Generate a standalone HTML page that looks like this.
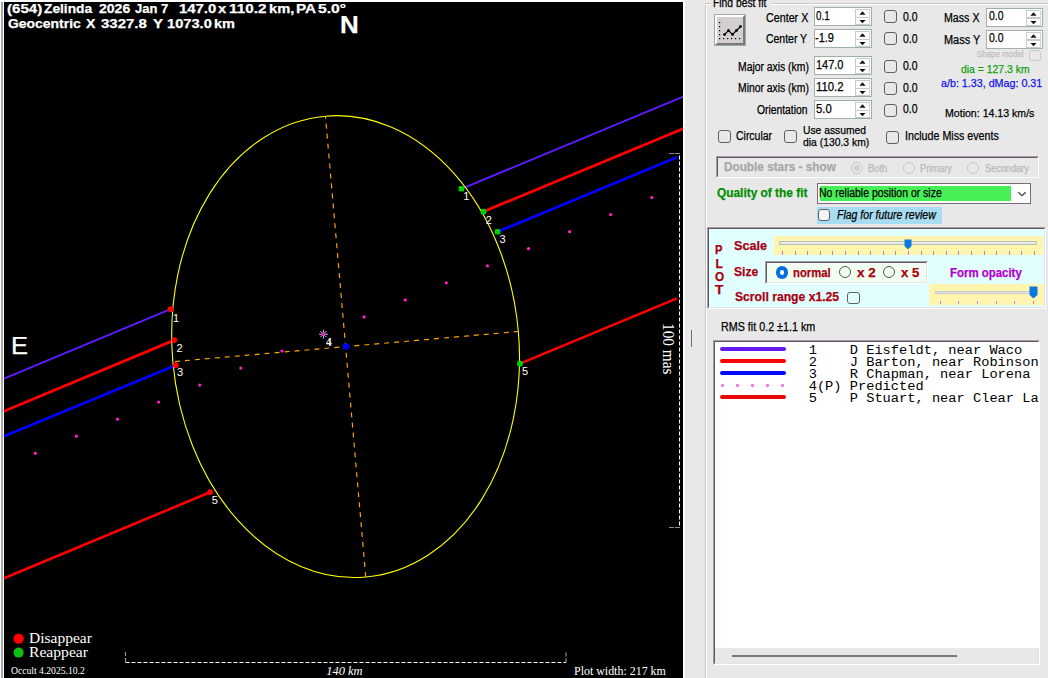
<!DOCTYPE html>
<html><head><meta charset="utf-8">
<style>
*{box-sizing:border-box}
html,body{margin:0;padding:0;overflow:hidden}
body{width:1048px;height:678px;overflow:hidden;position:relative;background:#e8e8e8;font-family:"Liberation Sans",sans-serif;}
.a{position:absolute;white-space:nowrap}
.nud{position:absolute;width:58px;height:19px;background:#fff;border:1px solid #a0b0a8}
.nud .sp{position:absolute;right:1px;top:1px;width:15px;height:16px;border:1px solid #c4d0c4;border-right-color:#d0d8d0}
.nud .sp b{position:absolute;left:0;right:0;top:6.5px;height:1.5px;background:#c8ccc8}
.nud .sp svg{position:absolute;left:0;top:0}
.cb{position:absolute;width:13px;height:13px;border:1px solid #606060;border-radius:3px}
.rd{position:absolute;width:12px;height:12px;border:1px solid #555;border-radius:50%}
</style></head><body>
<div class="a" style="left:0;top:0;width:4px;height:678px;background:#fff"></div>
<div class="a" style="left:1px;top:2px;width:2px;height:676px;background:#a8a8a8"></div>
<div class="a" style="left:0;top:0;width:685px;height:2px;background:#fff"></div>
<div class="a" style="left:4px;top:2px;width:679px;height:676px;background:#000"></div>
<div class="a" style="left:683px;top:0;width:2px;height:678px;background:#fff"></div>

<svg width="683" height="678" style="position:absolute;left:0;top:0"><circle cx="35.3" cy="453.3" r="1.6" fill="#ff20c0"/><circle cx="76.4" cy="436.2" r="1.6" fill="#ff20c0"/><circle cx="117.5" cy="419.2" r="1.6" fill="#ff20c0"/><circle cx="158.6" cy="402.1" r="1.6" fill="#ff20c0"/><circle cx="199.7" cy="385.1" r="1.6" fill="#ff20c0"/><circle cx="240.8" cy="368.1" r="1.6" fill="#ff20c0"/><circle cx="281.9" cy="351.0" r="1.6" fill="#ff20c0"/><circle cx="364.1" cy="316.9" r="1.6" fill="#ff20c0"/><circle cx="405.2" cy="299.9" r="1.6" fill="#ff20c0"/><circle cx="446.3" cy="282.8" r="1.6" fill="#ff20c0"/><circle cx="487.4" cy="265.8" r="1.6" fill="#ff20c0"/><circle cx="528.5" cy="248.7" r="1.6" fill="#ff20c0"/><circle cx="569.6" cy="231.7" r="1.6" fill="#ff20c0"/><circle cx="610.7" cy="214.6" r="1.6" fill="#ff20c0"/><circle cx="651.8" cy="197.6" r="1.6" fill="#ff20c0"/><line x1="4" y1="378.6" x2="170.6" y2="309.2" stroke="#5c1cff" stroke-width="1.9"/><line x1="461.4" y1="188.8" x2="684" y2="96.4" stroke="#5c1cff" stroke-width="1.9"/><line x1="4" y1="411.3" x2="174.3" y2="340.1" stroke="#ff0000" stroke-width="2.8"/><line x1="483.5" y1="211.6" x2="684" y2="128.4" stroke="#ff0000" stroke-width="2.8"/><line x1="4" y1="436.3" x2="175.8" y2="365.2" stroke="#0000ff" stroke-width="2.8"/><line x1="497.5" y1="231.8" x2="677" y2="157.3" stroke="#0000ff" stroke-width="2.8"/><line x1="4" y1="578.2" x2="210.1" y2="492.2" stroke="#ff0000" stroke-width="2.6"/><line x1="519.9" y1="363.6" x2="677" y2="298.4" stroke="#ff0000" stroke-width="2.6"/><g transform="translate(345.6,346.6) rotate(-5)"><ellipse cx="0" cy="0" rx="173.4" ry="231.3" fill="none" stroke="#ffff00" stroke-width="1.1"/><line x1="0" y1="-231.3" x2="0" y2="231.3" stroke="#ffa800" stroke-width="1.15" stroke-dasharray="5 5" stroke-dashoffset="2.5"/><line x1="-173.4" y1="0" x2="173.4" y2="0" stroke="#ffa800" stroke-width="1.15" stroke-dasharray="5 5" stroke-dashoffset="-2.1"/></g><circle cx="170.6" cy="309.2" r="2.9" fill="#ff0000"/><rect x="458.6" y="186.0" width="5.6" height="5.6" rx="1.6" fill="#00d000"/><circle cx="174.3" cy="340.1" r="2.9" fill="#ff0000"/><rect x="480.7" y="208.8" width="5.6" height="5.6" rx="1.6" fill="#00d000"/><circle cx="175.8" cy="365.2" r="2.9" fill="#ff0000"/><rect x="494.7" y="229.0" width="5.6" height="5.6" rx="1.6" fill="#00d000"/><circle cx="210.1" cy="492.2" r="2.9" fill="#ff0000"/><rect x="517.1" y="360.8" width="5.6" height="5.6" rx="1.6" fill="#00d000"/><circle cx="346" cy="346.6" r="3.3" fill="#0000ff"/><line x1="319.0" y1="334.2" x2="327.8" y2="334.2" stroke="#c8b8f0" stroke-width="1"/><line x1="320.3" y1="331.1" x2="326.5" y2="337.3" stroke="#c8b8f0" stroke-width="1"/><line x1="323.4" y1="329.8" x2="323.4" y2="338.6" stroke="#c8b8f0" stroke-width="1"/><line x1="326.5" y1="331.1" x2="320.3" y2="337.3" stroke="#c8b8f0" stroke-width="1"/><circle cx="323.4" cy="334.2" r="1.8" fill="#ff20c0"/><path d="M669.5 153.5 H679.5 V527.5 H669.5" fill="none" stroke="#ffffff" stroke-width="1" stroke-dasharray="4 2"/><path d="M669.5 153.5 H679.5 M679.5 527.5 H669.5" fill="none" stroke="#909090" stroke-width="1.2" stroke-dasharray="4 2"/><path d="M125.5 662.5 H566" fill="none" stroke="#ffffff" stroke-width="1.2" stroke-dasharray="4 2"/><path d="M125.5 652 V662.5 M566 662.5 V652" fill="none" stroke="#a0a0a0" stroke-width="1.1" stroke-dasharray="4 2"/><circle cx="18.6" cy="638.6" r="5.2" fill="#ff0000"/><circle cx="18.6" cy="652.6" r="5" fill="#10c010"/></svg>
<div class="a" style="left:678.4px;top:323px;font-family:'Liberation Serif',serif;font-size:17px;line-height:normal;color:#fff;transform:rotate(90deg) scaleX(0.902);transform-origin:0 0">100 mas</div>
<div class="a" style="left:705px;top:3px;width:343px;height:1px;background:#c8c8c8"></div>
<div class="a" style="left:706px;top:4px;width:342px;height:1px;background:#fff"></div>
<div class="a" style="left:705px;top:3px;width:1px;height:675px;background:#c8c8c8"></div>
<div class="a" style="left:706px;top:4px;width:1px;height:674px;background:#fff"></div>
<div class="a" style="left:711px;top:0px;width:60px;height:9px;background:#e8e8e8"></div>
<div class="a" style="left:714px;top:14px;width:32px;height:32px;border:1px solid #a0a8a0;background:#d2ced2"><div style="position:absolute;left:0;top:0;right:0;bottom:0;border-top:2px solid #fff;border-left:2px solid #fff;border-right:2px solid #7a7a7a;border-bottom:2px solid #7a7a7a"></div><svg width="32" height="32" style="position:absolute;left:-1px;top:-1px"><rect x="5" y="8" width="1.2" height="1.2"/><rect x="5" y="12" width="1.2" height="1.2"/><rect x="5" y="16" width="1.2" height="1.2"/><rect x="5" y="20" width="1.2" height="1.2"/><rect x="5" y="24" width="1.2" height="1.2"/><rect x="9" y="24" width="1.2" height="1.2"/><rect x="13" y="24" width="1.2" height="1.2"/><rect x="17" y="24" width="1.2" height="1.2"/><rect x="21" y="24" width="1.2" height="1.2"/><rect x="25" y="24" width="1.2" height="1.2"/><polyline points="10.5,20.5 14.5,16.5 18.5,20.5 22.5,16.5 26.5,12.5" fill="none" stroke="#000" stroke-width="1.1"/><rect x="9.2" y="19.2" width="2.6" height="2.6" rx="0.8"/><rect x="13.2" y="15.2" width="2.6" height="2.6" rx="0.8"/><rect x="17.2" y="19.2" width="2.6" height="2.6" rx="0.8"/><rect x="21.2" y="15.2" width="2.6" height="2.6" rx="0.8"/><rect x="25.2" y="11.2" width="2.6" height="2.6" rx="0.8"/></svg></div>
<div class="nud" style="left:814px;top:7px;width:58px"><div class="sp"><b></b><svg width="13" height="14"><polygon points="3.4,4.8 9.6,4.8 6.5,1.3" fill="#111"/><polygon points="3.4,9.9 9.6,9.9 6.5,13.2" fill="#111"/></svg></div></div>
<div class="nud" style="left:814px;top:29px;width:58px"><div class="sp"><b></b><svg width="13" height="14"><polygon points="3.4,4.8 9.6,4.8 6.5,1.3" fill="#111"/><polygon points="3.4,9.9 9.6,9.9 6.5,13.2" fill="#111"/></svg></div></div>
<div class="nud" style="left:814px;top:56px;width:58px"><div class="sp"><b></b><svg width="13" height="14"><polygon points="3.4,4.8 9.6,4.8 6.5,1.3" fill="#111"/><polygon points="3.4,9.9 9.6,9.9 6.5,13.2" fill="#111"/></svg></div></div>
<div class="nud" style="left:814px;top:78px;width:58px"><div class="sp"><b></b><svg width="13" height="14"><polygon points="3.4,4.8 9.6,4.8 6.5,1.3" fill="#111"/><polygon points="3.4,9.9 9.6,9.9 6.5,13.2" fill="#111"/></svg></div></div>
<div class="nud" style="left:814px;top:100px;width:58px"><div class="sp"><b></b><svg width="13" height="14"><polygon points="3.4,4.8 9.6,4.8 6.5,1.3" fill="#111"/><polygon points="3.4,9.9 9.6,9.9 6.5,13.2" fill="#111"/></svg></div></div>
<div class="cb" style="left:884px;top:10px"></div>
<div class="cb" style="left:884px;top:32px"></div>
<div class="cb" style="left:884px;top:59.5px"></div>
<div class="cb" style="left:884px;top:81.5px"></div>
<div class="cb" style="left:884px;top:103.5px"></div>
<div class="nud" style="left:986px;top:7.5px;width:57px"><div class="sp"><b></b><svg width="13" height="14"><polygon points="3.4,4.8 9.6,4.8 6.5,1.3" fill="#111"/><polygon points="3.4,9.9 9.6,9.9 6.5,13.2" fill="#111"/></svg></div></div>
<div class="nud" style="left:986px;top:29.5px;width:57px"><div class="sp"><b></b><svg width="13" height="14"><polygon points="3.4,4.8 9.6,4.8 6.5,1.3" fill="#111"/><polygon points="3.4,9.9 9.6,9.9 6.5,13.2" fill="#111"/></svg></div></div>
<div class="cb" style="left:1029px;top:50px;width:12px;height:11px;border-color:#c8c8c8"></div>
<div class="cb" style="left:718px;top:130px"></div>
<div class="cb" style="left:784px;top:130px"></div>
<div class="cb" style="left:886px;top:131px"></div>
<div class="a" style="left:716px;top:156px;width:323px;height:22px;border-top:1px solid #a0a0a0;border-left:1px solid #a0a0a0;border-right:1px solid #fff;border-bottom:1px solid #fff"><div style="position:absolute;left:0;top:0;right:0;bottom:0;background:transparent;border-top:1px solid #6a506a;border-left:1px solid #6a506a;border-right:1px solid #e4e4e4;border-bottom:1px solid #e4e4e4"></div></div>
<div class="rd" style="left:851px;top:162px;border-color:#c8c8c8"></div>
<div class="rd" style="left:902.5px;top:162px;border-color:#c8c8c8"></div>
<div class="rd" style="left:967px;top:162px;border-color:#c8c8c8"></div>
<div class="a" style="left:854px;top:165px;width:6px;height:6px;border-radius:50%;background:#d0d0d0"></div>
<div class="a" style="left:817px;top:183px;width:214px;height:21px;background:#fff;border:1px solid #7a6a7a"></div>
<div class="a" style="left:820px;top:186px;width:191px;height:15px;background:#48f058"></div>
<svg class="a" style="left:1016px;top:190px" width="11" height="8"><polyline points="2.3,2.3 6,5.7 9.7,2.3" fill="none" stroke="#4a3a4a" stroke-width="1.2"/></svg>
<div class="a" style="left:817px;top:206.5px;width:125px;height:17.5px;background:#a8dcf0"></div>
<div class="cb" style="left:817.5px;top:208.5px;width:12.5px;height:12.5px;background:#f4f4f4"></div>
<div class="a" style="left:707px;top:227px;width:339px;height:82px;border-top:1px solid #a0a0a0;border-left:1px solid #a0a0a0;border-right:1px solid #fff;border-bottom:1px solid #fff"><div style="position:absolute;left:0;top:0;right:0;bottom:0;background:#e2ffff;border-top:1px solid #6a506a;border-left:1px solid #6a506a;border-right:1px solid #e4e4e4;border-bottom:1px solid #e4e4e4"></div></div>
<div class="a" style="left:774px;top:236px;width:269px;height:19px;background:#fef6ae"></div>
<div class="a" style="left:779px;top:241px;width:258px;height:4px;background:#e8e8e8;border:1px solid #b8c0b8"></div>
<svg class="a" style="left:904px;top:239px" width="8" height="11"><path d="M0.5 0.5 H7.5 V7 L4 10.5 L0.5 7 Z" fill="#0a78e0"/></svg>
<div class="a" style="left:782.0px;top:251px;width:1px;height:3.5px;background:#c878d8"></div><div class="a" style="left:794.6px;top:251px;width:1px;height:3.5px;background:#c878d8"></div><div class="a" style="left:807.2px;top:251px;width:1px;height:3.5px;background:#c878d8"></div><div class="a" style="left:819.8px;top:251px;width:1px;height:3.5px;background:#c878d8"></div><div class="a" style="left:832.4px;top:251px;width:1px;height:3.5px;background:#c878d8"></div><div class="a" style="left:845.0px;top:251px;width:1px;height:3.5px;background:#c878d8"></div><div class="a" style="left:857.6px;top:251px;width:1px;height:3.5px;background:#c878d8"></div><div class="a" style="left:870.2px;top:251px;width:1px;height:3.5px;background:#c878d8"></div><div class="a" style="left:882.8px;top:251px;width:1px;height:3.5px;background:#c878d8"></div><div class="a" style="left:895.4px;top:251px;width:1px;height:3.5px;background:#c878d8"></div><div class="a" style="left:908.0px;top:251px;width:1px;height:3.5px;background:#c878d8"></div><div class="a" style="left:920.6px;top:251px;width:1px;height:3.5px;background:#c878d8"></div><div class="a" style="left:933.2px;top:251px;width:1px;height:3.5px;background:#c878d8"></div><div class="a" style="left:945.8px;top:251px;width:1px;height:3.5px;background:#c878d8"></div><div class="a" style="left:958.4px;top:251px;width:1px;height:3.5px;background:#c878d8"></div><div class="a" style="left:971.0px;top:251px;width:1px;height:3.5px;background:#c878d8"></div><div class="a" style="left:983.6px;top:251px;width:1px;height:3.5px;background:#c878d8"></div><div class="a" style="left:996.2px;top:251px;width:1px;height:3.5px;background:#c878d8"></div><div class="a" style="left:1008.8px;top:251px;width:1px;height:3.5px;background:#c878d8"></div><div class="a" style="left:1021.4px;top:251px;width:1px;height:3.5px;background:#c878d8"></div><div class="a" style="left:1034.0px;top:251px;width:1px;height:3.5px;background:#c878d8"></div>
<div class="a" style="left:765px;top:261px;width:163px;height:23px;border-top:1px solid #a0a0a0;border-left:1px solid #a0a0a0;border-right:1px solid #fff;border-bottom:1px solid #fff"><div style="position:absolute;left:0;top:0;right:0;bottom:0;background:#f0fff0;border-top:1px solid #6a506a;border-left:1px solid #6a506a;border-right:1px solid #e4e4e4;border-bottom:1px solid #e4e4e4"></div></div>
<div class="a" style="left:775.5px;top:266px;width:12.5px;height:12.5px;border-radius:50%;background:#0a6ce0"></div>
<div class="a" style="left:779.5px;top:270px;width:4.5px;height:4.5px;border-radius:50%;background:#fff"></div>
<div class="rd" style="left:839px;top:266px"></div>
<div class="rd" style="left:883px;top:266px"></div>
<div class="a" style="left:928.5px;top:284px;width:115px;height:21px;background:#fef6ae"></div>
<div class="a" style="left:935px;top:290.5px;width:102px;height:3px;background:#e4e4e4;border:1px solid #c8c8c8"></div>
<svg class="a" style="left:1029px;top:286px" width="9" height="13"><path d="M0.5 0.5 H8.5 V9 L4.5 12.5 L0.5 9 Z" fill="#0a78e0"/></svg>
<div class="a" style="left:939.5px;top:300.8px;width:1px;height:3.5px;background:#c878d8"></div><div class="a" style="left:958.2px;top:300.8px;width:1px;height:3.5px;background:#c878d8"></div><div class="a" style="left:976.9px;top:300.8px;width:1px;height:3.5px;background:#c878d8"></div><div class="a" style="left:995.6px;top:300.8px;width:1px;height:3.5px;background:#c878d8"></div><div class="a" style="left:1014.3px;top:300.8px;width:1px;height:3.5px;background:#c878d8"></div><div class="a" style="left:1033.0px;top:300.8px;width:1px;height:3.5px;background:#c878d8"></div>
<div class="cb" style="left:847px;top:292px;width:12.5px;height:12px"></div>
<div class="a" style="left:691px;top:330px;width:1px;height:17px;background:#707070"></div>
<div class="a" style="left:713px;top:340px;width:327px;height:325px;border-top:1px solid #a0a0a0;border-left:1px solid #a0a0a0;border-right:1px solid #fff;border-bottom:1px solid #fff"><div style="position:absolute;left:0;top:0;right:0;bottom:0;background:#e8e8e8;border-top:1px solid #6a506a;border-left:1px solid #6a506a;border-right:1px solid #e4e4e4;border-bottom:1px solid #e4e4e4"></div></div>
<div class="a" style="left:715px;top:342px;width:324px;height:306px;background:#fff"></div>
<div class="a" style="left:732px;top:655px;width:225px;height:2px;background:#787878"></div>
<div class="a" style="left:720px;top:347.2px;width:66px;height:3.5px;border-radius:2px;background:#6218f0"></div>
<div class="a" style="left:720px;top:359px;width:66px;height:4px;border-radius:2px;background:#ff0000"></div>
<div class="a" style="left:720px;top:371.1px;width:66px;height:4px;border-radius:2px;background:#0008ff"></div>
<div class="a" style="left:721.0px;top:384.2px;width:3.2px;height:3.2px;border-radius:50%;border:1px solid #ff10d0"></div><div class="a" style="left:736.0px;top:384.2px;width:3.2px;height:3.2px;border-radius:50%;border:1px solid #ff10d0"></div><div class="a" style="left:751.0px;top:384.2px;width:3.2px;height:3.2px;border-radius:50%;border:1px solid #ff10d0"></div><div class="a" style="left:766.0px;top:384.2px;width:3.2px;height:3.2px;border-radius:50%;border:1px solid #ff10d0"></div><div class="a" style="left:781.0px;top:384.2px;width:3.2px;height:3.2px;border-radius:50%;border:1px solid #ff10d0"></div>
<div class="a" style="left:720px;top:395.4px;width:66px;height:3.5px;border-radius:2px;background:#e80808"></div>
<div class="a" style="left:808.7px;top:342.9px;font-family:'Liberation Mono',monospace;font-size:13.7px;line-height:normal;color:#000;white-space:pre">1    D Eisfeldt, near Waco</div>
<div class="a" style="left:808.7px;top:354.9px;font-family:'Liberation Mono',monospace;font-size:13.7px;line-height:normal;color:#000;white-space:pre">2    J Barton, near Robinson</div>
<div class="a" style="left:808.7px;top:366.9px;font-family:'Liberation Mono',monospace;font-size:13.7px;line-height:normal;color:#000;white-space:pre">3    R Chapman, near Lorena</div>
<div class="a" style="left:808.7px;top:378.9px;font-family:'Liberation Mono',monospace;font-size:13.7px;line-height:normal;color:#000;white-space:pre">4(P) Predicted</div>
<div class="a" style="left:808.7px;top:390.9px;font-family:'Liberation Mono',monospace;font-size:13.7px;line-height:normal;color:#000;white-space:pre">5    P Stuart, near Clear La</div>
<div class="a" style="left:6.58px;top:0.90px;font-family:'Liberation Sans',sans-serif;font-size:13.5px;font-weight:bold;font-style:normal;line-height:normal;color:#fff;-webkit-text-stroke:0.25px #fff;transform:scaleX(1.1167);transform-origin:0 0;">(654)</div>
<div class="a" style="left:43.80px;top:0.90px;font-family:'Liberation Sans',sans-serif;font-size:13.5px;font-weight:bold;font-style:normal;line-height:normal;color:#fff;-webkit-text-stroke:0.25px #fff;transform:scaleX(1.0188);transform-origin:0 0;">Zelinda</div>
<div class="a" style="left:99.30px;top:0.90px;font-family:'Liberation Sans',sans-serif;font-size:13.5px;font-weight:bold;font-style:normal;line-height:normal;color:#fff;-webkit-text-stroke:0.25px #fff;transform:scaleX(1.0400);transform-origin:0 0;">2026</div>
<div class="a" style="left:134.80px;top:0.90px;font-family:'Liberation Sans',sans-serif;font-size:13.5px;font-weight:bold;font-style:normal;line-height:normal;color:#fff;-webkit-text-stroke:0.25px #fff;transform:scaleX(0.9618);transform-origin:0 0;">Jan 7</div>
<div class="a" style="left:178.90px;top:0.90px;font-family:'Liberation Sans',sans-serif;font-size:13.5px;font-weight:bold;font-style:normal;line-height:normal;color:#fff;-webkit-text-stroke:0.25px #fff;transform:scaleX(1.1031);transform-origin:0 0;">147.0</div>
<div class="a" style="left:218.20px;top:0.90px;font-family:'Liberation Sans',sans-serif;font-size:13.5px;font-weight:bold;font-style:normal;line-height:normal;color:#fff;-webkit-text-stroke:0.25px #fff;transform:scaleX(1.0857);transform-origin:0 0;">x</div>
<div class="a" style="left:228.57px;top:0.90px;font-family:'Liberation Sans',sans-serif;font-size:13.5px;font-weight:bold;font-style:normal;line-height:normal;color:#fff;-webkit-text-stroke:0.25px #fff;transform:scaleX(1.1312);transform-origin:0 0;">110.2</div>
<div class="a" style="left:268.61px;top:0.90px;font-family:'Liberation Sans',sans-serif;font-size:13.5px;font-weight:bold;font-style:normal;line-height:normal;color:#fff;-webkit-text-stroke:0.25px #fff;transform:scaleX(1.0864);transform-origin:0 0;">km,</div>
<div class="a" style="left:296.27px;top:0.90px;font-family:'Liberation Sans',sans-serif;font-size:13.5px;font-weight:bold;font-style:normal;line-height:normal;color:#fff;-webkit-text-stroke:0.25px #fff;transform:scaleX(1.1313);transform-origin:0 0;">PA</div>
<div class="a" style="left:318.13px;top:0.90px;font-family:'Liberation Sans',sans-serif;font-size:13.5px;font-weight:bold;font-style:normal;line-height:normal;color:#fff;-webkit-text-stroke:0.25px #fff;transform:scaleX(1.1652);transform-origin:0 0;">5.0°</div>
<div class="a" style="left:7.70px;top:16.40px;font-family:'Liberation Sans',sans-serif;font-size:13.5px;font-weight:bold;font-style:normal;line-height:normal;color:#fff;-webkit-text-stroke:0.25px #fff;transform:scaleX(1.0314);transform-origin:0 0;">Geocentric</div>
<div class="a" style="left:85.90px;top:16.40px;font-family:'Liberation Sans',sans-serif;font-size:13.5px;font-weight:bold;font-style:normal;line-height:normal;color:#fff;-webkit-text-stroke:0.25px #fff;transform:scaleX(1.0444);transform-origin:0 0;">X</div>
<div class="a" style="left:101.29px;top:16.40px;font-family:'Liberation Sans',sans-serif;font-size:13.5px;font-weight:bold;font-style:normal;line-height:normal;color:#fff;-webkit-text-stroke:0.25px #fff;transform:scaleX(1.1100);transform-origin:0 0;">3327.8</div>
<div class="a" style="left:152.80px;top:16.40px;font-family:'Liberation Sans',sans-serif;font-size:13.5px;font-weight:bold;font-style:normal;line-height:normal;color:#fff;-webkit-text-stroke:0.25px #fff;transform:scaleX(1.1111);transform-origin:0 0;">Y</div>
<div class="a" style="left:167.01px;top:16.40px;font-family:'Liberation Sans',sans-serif;font-size:13.5px;font-weight:bold;font-style:normal;line-height:normal;color:#fff;-webkit-text-stroke:0.25px #fff;transform:scaleX(1.0850);transform-origin:0 0;">1073.0</div>
<div class="a" style="left:213.83px;top:16.40px;font-family:'Liberation Sans',sans-serif;font-size:13.5px;font-weight:bold;font-style:normal;line-height:normal;color:#fff;-webkit-text-stroke:0.25px #fff;transform:scaleX(1.0722);transform-origin:0 0;">km</div>
<div class="a" style="left:340.17px;top:11.80px;font-family:'Liberation Sans',sans-serif;font-size:23px;font-weight:bold;font-style:normal;line-height:normal;color:#fff;-webkit-text-stroke:0.25px #fff;transform:scaleX(1.1286);transform-origin:0 0;">N</div>
<div class="a" style="left:11.38px;top:332.90px;font-family:'Liberation Sans',sans-serif;font-size:23px;font-weight:normal;font-style:normal;line-height:normal;color:#fff;-webkit-text-stroke:0.25px #fff;transform:scaleX(1.1077);transform-origin:0 0;">E</div>
<div class="a" style="left:173.00px;top:311.60px;font-family:'Liberation Sans',sans-serif;font-size:11px;font-weight:normal;font-style:normal;line-height:normal;color:#fff;-webkit-text-stroke:0.25px #fff;-webkit-text-stroke:0;">1</div>
<div class="a" style="left:176.50px;top:342.00px;font-family:'Liberation Sans',sans-serif;font-size:11px;font-weight:normal;font-style:normal;line-height:normal;color:#fff;-webkit-text-stroke:0.25px #fff;-webkit-text-stroke:0;">2</div>
<div class="a" style="left:177.00px;top:366.20px;font-family:'Liberation Sans',sans-serif;font-size:11px;font-weight:normal;font-style:normal;line-height:normal;color:#fff;-webkit-text-stroke:0.25px #fff;-webkit-text-stroke:0;">3</div>
<div class="a" style="left:211.80px;top:494.10px;font-family:'Liberation Sans',sans-serif;font-size:11px;font-weight:normal;font-style:normal;line-height:normal;color:#fff;-webkit-text-stroke:0.25px #fff;-webkit-text-stroke:0;">5</div>
<div class="a" style="left:463.30px;top:189.70px;font-family:'Liberation Sans',sans-serif;font-size:11px;font-weight:normal;font-style:normal;line-height:normal;color:#fff;-webkit-text-stroke:0.25px #fff;-webkit-text-stroke:0;">1</div>
<div class="a" style="left:485.70px;top:214.00px;font-family:'Liberation Sans',sans-serif;font-size:11px;font-weight:normal;font-style:normal;line-height:normal;color:#fff;-webkit-text-stroke:0.25px #fff;-webkit-text-stroke:0;">2</div>
<div class="a" style="left:499.50px;top:233.20px;font-family:'Liberation Sans',sans-serif;font-size:11px;font-weight:normal;font-style:normal;line-height:normal;color:#fff;-webkit-text-stroke:0.25px #fff;-webkit-text-stroke:0;">3</div>
<div class="a" style="left:522.00px;top:365.10px;font-family:'Liberation Sans',sans-serif;font-size:11px;font-weight:normal;font-style:normal;line-height:normal;color:#fff;-webkit-text-stroke:0.25px #fff;-webkit-text-stroke:0;">5</div>
<div class="a" style="left:326.10px;top:335.90px;font-family:'Liberation Serif',serif;font-size:11.5px;font-weight:bold;font-style:normal;line-height:normal;color:#fff;transform:scaleX(0.9833);transform-origin:0 0;">4</div>
<div class="a" style="left:29.37px;top:630.30px;font-family:'Liberation Serif',serif;font-size:15px;font-weight:normal;font-style:normal;line-height:normal;color:#fff;transform:scaleX(1.0333);transform-origin:0 0;">Disappear</div>
<div class="a" style="left:29.36px;top:644.20px;font-family:'Liberation Serif',serif;font-size:15px;font-weight:normal;font-style:normal;line-height:normal;color:#fff;transform:scaleX(1.0411);transform-origin:0 0;">Reappear</div>
<div class="a" style="left:11.20px;top:664.60px;font-family:'Liberation Serif',serif;font-size:10px;font-weight:normal;font-style:normal;line-height:normal;color:#fff;transform:scaleX(0.9632);transform-origin:0 0;">Occult 4.2025.10.2</div>
<div class="a" style="left:326.20px;top:664.40px;font-family:'Liberation Serif',serif;font-size:12.5px;font-weight:normal;font-style:italic;line-height:normal;color:#fff;">140 km</div>
<div class="a" style="left:574.05px;top:664.40px;font-family:'Liberation Serif',serif;font-size:12.5px;font-weight:normal;font-style:normal;line-height:normal;color:#fff;transform:scaleX(0.9547);transform-origin:0 0;">Plot width: 217 km</div>
<div class="a" style="left:713.44px;top:-4.30px;font-family:'Liberation Sans',sans-serif;font-size:12px;font-weight:normal;font-style:normal;line-height:normal;color:#000;-webkit-text-stroke:0.25px #000;transform:scaleX(0.8607);transform-origin:0 0;">Find best fit</div>
<div class="a" style="left:765.81px;top:10.80px;font-family:'Liberation Sans',sans-serif;font-size:12px;font-weight:normal;font-style:normal;line-height:normal;color:#000;-webkit-text-stroke:0.25px #000;transform:scaleX(0.8935);transform-origin:0 0;">Center X</div>
<div class="a" style="left:765.83px;top:32.30px;font-family:'Liberation Sans',sans-serif;font-size:12px;font-weight:normal;font-style:normal;line-height:normal;color:#000;-webkit-text-stroke:0.25px #000;transform:scaleX(0.8717);transform-origin:0 0;">Center Y</div>
<div class="a" style="left:737.94px;top:59.50px;font-family:'Liberation Sans',sans-serif;font-size:12px;font-weight:normal;font-style:normal;line-height:normal;color:#000;-webkit-text-stroke:0.25px #000;transform:scaleX(0.8638);transform-origin:0 0;">Major axis (km)</div>
<div class="a" style="left:737.94px;top:81.40px;font-family:'Liberation Sans',sans-serif;font-size:12px;font-weight:normal;font-style:normal;line-height:normal;color:#000;-webkit-text-stroke:0.25px #000;transform:scaleX(0.8638);transform-origin:0 0;">Minor axis (km)</div>
<div class="a" style="left:757.00px;top:102.60px;font-family:'Liberation Sans',sans-serif;font-size:12px;font-weight:normal;font-style:normal;line-height:normal;color:#000;-webkit-text-stroke:0.25px #000;transform:scaleX(0.8603);transform-origin:0 0;">Orientation</div>
<div class="a" style="left:816.40px;top:8.90px;font-family:'Liberation Sans',sans-serif;font-size:12.5px;font-weight:normal;font-style:normal;line-height:normal;color:#000;-webkit-text-stroke:0.25px #000;transform:scaleX(0.7824);transform-origin:0 0;">0.1</div>
<div class="a" style="left:815.22px;top:30.60px;font-family:'Liberation Sans',sans-serif;font-size:12.5px;font-weight:normal;font-style:normal;line-height:normal;color:#000;-webkit-text-stroke:0.25px #000;transform:scaleX(0.8800);transform-origin:0 0;">-1.9</div>
<div class="a" style="left:815.89px;top:79.80px;font-family:'Liberation Sans',sans-serif;font-size:12.5px;font-weight:normal;font-style:normal;line-height:normal;color:#000;-webkit-text-stroke:0.25px #000;transform:scaleX(0.9069);transform-origin:0 0;">110.2</div>
<div class="a" style="left:815.59px;top:101.90px;font-family:'Liberation Sans',sans-serif;font-size:12.5px;font-weight:normal;font-style:normal;line-height:normal;color:#000;-webkit-text-stroke:0.25px #000;transform:scaleX(0.9062);transform-origin:0 0;">5.0</div>
<div class="a" style="left:815.92px;top:58.00px;font-family:'Liberation Sans',sans-serif;font-size:12.5px;font-weight:normal;font-style:normal;line-height:normal;color:#000;-webkit-text-stroke:0.25px #000;transform:scaleX(0.8767);transform-origin:0 0;">147.0</div>
<div class="a" style="left:903.40px;top:9.60px;font-family:'Liberation Sans',sans-serif;font-size:12px;font-weight:normal;font-style:normal;line-height:normal;color:#000;-webkit-text-stroke:0.25px #000;transform:scaleX(0.8687);transform-origin:0 0;">0.0</div>
<div class="a" style="left:903.40px;top:31.70px;font-family:'Liberation Sans',sans-serif;font-size:12px;font-weight:normal;font-style:normal;line-height:normal;color:#000;-webkit-text-stroke:0.25px #000;transform:scaleX(0.8687);transform-origin:0 0;">0.0</div>
<div class="a" style="left:903.40px;top:58.80px;font-family:'Liberation Sans',sans-serif;font-size:12px;font-weight:normal;font-style:normal;line-height:normal;color:#000;-webkit-text-stroke:0.25px #000;transform:scaleX(0.8687);transform-origin:0 0;">0.0</div>
<div class="a" style="left:903.40px;top:80.70px;font-family:'Liberation Sans',sans-serif;font-size:12px;font-weight:normal;font-style:normal;line-height:normal;color:#000;-webkit-text-stroke:0.25px #000;transform:scaleX(0.8687);transform-origin:0 0;">0.0</div>
<div class="a" style="left:903.40px;top:102.40px;font-family:'Liberation Sans',sans-serif;font-size:12px;font-weight:normal;font-style:normal;line-height:normal;color:#000;-webkit-text-stroke:0.25px #000;transform:scaleX(0.8687);transform-origin:0 0;">0.0</div>
<div class="a" style="left:944.31px;top:10.50px;font-family:'Liberation Sans',sans-serif;font-size:12px;font-weight:normal;font-style:normal;line-height:normal;color:#000;-webkit-text-stroke:0.25px #000;transform:scaleX(0.8872);transform-origin:0 0;">Mass X</div>
<div class="a" style="left:944.29px;top:32.50px;font-family:'Liberation Sans',sans-serif;font-size:12px;font-weight:normal;font-style:normal;line-height:normal;color:#000;-webkit-text-stroke:0.25px #000;transform:scaleX(0.9105);transform-origin:0 0;">Mass Y</div>
<div class="a" style="left:988.60px;top:8.90px;font-family:'Liberation Sans',sans-serif;font-size:12.5px;font-weight:normal;font-style:normal;line-height:normal;color:#000;-webkit-text-stroke:0.25px #000;transform:scaleX(0.8353);transform-origin:0 0;">0.0</div>
<div class="a" style="left:988.60px;top:30.80px;font-family:'Liberation Sans',sans-serif;font-size:12.5px;font-weight:normal;font-style:normal;line-height:normal;color:#000;-webkit-text-stroke:0.25px #000;transform:scaleX(0.8353);transform-origin:0 0;">0.0</div>
<div class="a" style="left:976.67px;top:48.00px;font-family:'Liberation Sans',sans-serif;font-size:9.5px;font-weight:normal;font-style:normal;line-height:normal;color:#c0c0c0;-webkit-text-stroke:0.25px #c0c0c0;transform:scaleX(0.8315);transform-origin:0 0;">Shape model</div>
<div class="a" style="left:960.90px;top:63.30px;font-family:'Liberation Sans',sans-serif;font-size:11.5px;font-weight:normal;font-style:normal;line-height:normal;color:#10a010;-webkit-text-stroke:0.25px #10a010;transform:scaleX(0.9053);transform-origin:0 0;">dia = 127.3 km</div>
<div class="a" style="left:941.30px;top:77.00px;font-family:'Liberation Sans',sans-serif;font-size:11.5px;font-weight:normal;font-style:normal;line-height:normal;color:#1010f0;-webkit-text-stroke:0.25px #1010f0;transform:scaleX(0.9315);transform-origin:0 0;">a/b: 1.33, dMag: 0.31</div>
<div class="a" style="left:944.68px;top:107.00px;font-family:'Liberation Sans',sans-serif;font-size:11.5px;font-weight:normal;font-style:normal;line-height:normal;color:#000;-webkit-text-stroke:0.25px #000;transform:scaleX(0.9198);transform-origin:0 0;">Motion: 14.13 km/s</div>
<div class="a" style="left:735.53px;top:129.20px;font-family:'Liberation Sans',sans-serif;font-size:12px;font-weight:normal;font-style:normal;line-height:normal;color:#000;-webkit-text-stroke:0.25px #000;transform:scaleX(0.8725);transform-origin:0 0;">Circular</div>
<div class="a" style="left:802.50px;top:123.80px;font-family:'Liberation Sans',sans-serif;font-size:11.5px;font-weight:normal;font-style:normal;line-height:normal;color:#000;-webkit-text-stroke:0.25px #000;transform:scaleX(0.8957);transform-origin:0 0;">Use assumed</div>
<div class="a" style="left:803.40px;top:136.20px;font-family:'Liberation Sans',sans-serif;font-size:11.5px;font-weight:normal;font-style:normal;line-height:normal;color:#000;-webkit-text-stroke:0.25px #000;transform:scaleX(0.9014);transform-origin:0 0;">dia (130.3 km)</div>
<div class="a" style="left:904.81px;top:129.00px;font-family:'Liberation Sans',sans-serif;font-size:12px;font-weight:normal;font-style:normal;line-height:normal;color:#000;-webkit-text-stroke:0.25px #000;transform:scaleX(0.8894);transform-origin:0 0;">Include Miss events</div>
<div class="a" style="left:723.92px;top:159.60px;font-family:'Liberation Sans',sans-serif;font-size:12px;font-weight:bold;font-style:normal;line-height:normal;color:#a8a8a8;-webkit-text-stroke:0.25px #a8a8a8;transform:scaleX(0.9805);transform-origin:0 0;">Double stars - show</div>
<div class="a" style="left:867.91px;top:162.00px;font-family:'Liberation Sans',sans-serif;font-size:10.5px;font-weight:normal;font-style:normal;line-height:normal;color:#b8b8b8;-webkit-text-stroke:0.25px #b8b8b8;transform:scaleX(0.8900);transform-origin:0 0;">Both</div>
<div class="a" style="left:919.52px;top:162.00px;font-family:'Liberation Sans',sans-serif;font-size:10.5px;font-weight:normal;font-style:normal;line-height:normal;color:#b8b8b8;-webkit-text-stroke:0.25px #b8b8b8;transform:scaleX(0.8800);transform-origin:0 0;">Primary</div>
<div class="a" style="left:985.03px;top:162.00px;font-family:'Liberation Sans',sans-serif;font-size:10.5px;font-weight:normal;font-style:normal;line-height:normal;color:#b8b8b8;-webkit-text-stroke:0.25px #b8b8b8;transform:scaleX(0.8714);transform-origin:0 0;">Secondary</div>
<div class="a" style="left:717.20px;top:186.20px;font-family:'Liberation Sans',sans-serif;font-size:12px;font-weight:bold;font-style:normal;line-height:normal;color:#009000;-webkit-text-stroke:0.25px #009000;transform:scaleX(0.9901);transform-origin:0 0;">Quality of the fit</div>
<div class="a" style="left:819.33px;top:186.10px;font-family:'Liberation Sans',sans-serif;font-size:12px;font-weight:normal;font-style:normal;line-height:normal;color:#000;-webkit-text-stroke:0.25px #000;transform:scaleX(0.8719);transform-origin:0 0;">No reliable position or size</div>
<div class="a" style="left:836.80px;top:208.00px;font-family:'Liberation Sans',sans-serif;font-size:12px;font-weight:normal;font-style:italic;line-height:normal;color:#000;-webkit-text-stroke:0.25px #000;transform:scaleX(0.8761);transform-origin:0 0;">Flag for future review</div>
<div class="a" style="left:715.07px;top:243.00px;font-family:'Liberation Sans',sans-serif;font-size:12px;font-weight:bold;font-style:normal;line-height:normal;color:#a80010;-webkit-text-stroke:0.25px #a80010;transform:scaleX(0.9286);transform-origin:0 0;">P</div>
<div class="a" style="left:715.50px;top:256.50px;font-family:'Liberation Sans',sans-serif;font-size:12px;font-weight:bold;font-style:normal;line-height:normal;color:#a80010;-webkit-text-stroke:0.25px #a80010;">L</div>
<div class="a" style="left:714.90px;top:269.50px;font-family:'Liberation Sans',sans-serif;font-size:12px;font-weight:bold;font-style:normal;line-height:normal;color:#a80010;-webkit-text-stroke:0.25px #a80010;transform:scaleX(0.9778);transform-origin:0 0;">O</div>
<div class="a" style="left:715.00px;top:282.50px;font-family:'Liberation Sans',sans-serif;font-size:12px;font-weight:bold;font-style:normal;line-height:normal;color:#a80010;-webkit-text-stroke:0.25px #a80010;transform:scaleX(1.1429);transform-origin:0 0;">T</div>
<div class="a" style="left:734.49px;top:238.80px;font-family:'Liberation Sans',sans-serif;font-size:12.5px;font-weight:bold;font-style:normal;line-height:normal;color:#a80010;-webkit-text-stroke:0.25px #a80010;transform:scaleX(1.0097);transform-origin:0 0;">Scale</div>
<div class="a" style="left:734.23px;top:264.70px;font-family:'Liberation Sans',sans-serif;font-size:12.5px;font-weight:bold;font-style:normal;line-height:normal;color:#a80010;-webkit-text-stroke:0.25px #a80010;transform:scaleX(0.9667);transform-origin:0 0;">Size</div>
<div class="a" style="left:792.70px;top:265.50px;font-family:'Liberation Sans',sans-serif;font-size:12.5px;font-weight:bold;font-style:normal;line-height:normal;color:#a80010;-webkit-text-stroke:0.25px #a80010;transform:scaleX(0.9025);transform-origin:0 0;">normal</div>
<div class="a" style="left:857.20px;top:265.50px;font-family:'Liberation Sans',sans-serif;font-size:12.5px;font-weight:bold;font-style:normal;line-height:normal;color:#a80010;-webkit-text-stroke:0.25px #a80010;transform:scaleX(1.0765);transform-origin:0 0;">x 2</div>
<div class="a" style="left:901.40px;top:265.50px;font-family:'Liberation Sans',sans-serif;font-size:12.5px;font-weight:bold;font-style:normal;line-height:normal;color:#a80010;-webkit-text-stroke:0.25px #a80010;transform:scaleX(1.0529);transform-origin:0 0;">x 5</div>
<div class="a" style="left:949.75px;top:265.80px;font-family:'Liberation Sans',sans-serif;font-size:12px;font-weight:bold;font-style:normal;line-height:normal;color:#b400d0;-webkit-text-stroke:0.25px #b400d0;transform:scaleX(0.9527);transform-origin:0 0;">Form opacity</div>
<div class="a" style="left:735.03px;top:290.40px;font-family:'Liberation Sans',sans-serif;font-size:12.5px;font-weight:bold;font-style:normal;line-height:normal;color:#a80010;-webkit-text-stroke:0.25px #a80010;transform:scaleX(0.9726);transform-origin:0 0;">Scroll range x1.25</div>
<div class="a" style="left:720.50px;top:319.80px;font-family:'Liberation Sans',sans-serif;font-size:12px;font-weight:normal;font-style:normal;line-height:normal;color:#000;-webkit-text-stroke:0.25px #000;transform:scaleX(0.8952);transform-origin:0 0;">RMS fit 0.2 ±1.1 km</div>
</body></html>
